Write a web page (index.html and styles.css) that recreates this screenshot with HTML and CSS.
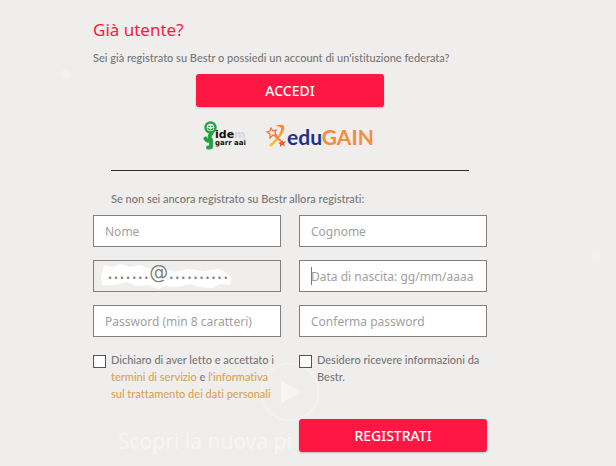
FILE: index.html
```html
<!DOCTYPE html>
<html lang="it">
<head>
<meta charset="utf-8">
<meta name="viewport" content="width=device-width, initial-scale=1">
<title>Bestr - Registrazione</title>
<link rel="stylesheet" href="styles.css">
</head>
<body>
<div class="backdrop" aria-hidden="true">
  <span class="spot spot-left"></span>
  <span class="spot spot-right"></span>
  <svg class="play" viewBox="0 0 60 60"><circle cx="30" cy="30" r="28.5" fill="none" stroke="#f4f3f0" stroke-width="1.5"/><path d="M21 19 40 30 21 41Z" fill="#f6f5f2"/></svg>
  <p class="teaser">Scopri la nuova pi</p>
</div>
<main class="page">
  <section class="login">
    <h1>Già utente?</h1>
    <p>Sei già registrato su Bestr o possiedi un account di un'istituzione federata?</p>
    <button class="btn btn-login" type="button">ACCEDI</button>
    <div class="logos">
      <svg class="idem" viewBox="0 0 44 32" role="img" aria-label="idem garr aai">
        <g fill="none" stroke="#25a244" stroke-linecap="round" stroke-linejoin="round">
          <circle cx="7.500" cy="7.500" r="5" stroke-width="2.400"/>
          <path d="M8.500 13Q5 18 8 20V27" stroke-width="4"/>
          <path d="M2.500 18.500Q4 22 7 20M7 27.500H5" stroke-width="4"/>
          <path d="M5 8.500q2.500 3 5 0" stroke-width="1.200"/>
        </g>
        <circle cx="6" cy="6.300" r="0.900" fill="#25a244"/><circle cx="9" cy="6.300" r="0.900" fill="#25a244"/>
        <text class="idem-name" x="12" y="18">ide<tspan fill="#d2d8d9">m</tspan></text>
        <text class="idem-sub" x="12" y="25">garr aai</text>
      </svg>
      <svg class="edugain" viewBox="0 0 112 32" role="img" aria-label="eduGAIN">
        <defs><linearGradient id="ribbon" x1="0" y1="0" x2="0" y2="1"><stop offset="0" stop-color="#f58635"/><stop offset="1" stop-color="#ffc52f"/></linearGradient></defs>
        <g transform="translate(1 2)">
          <path d="M9 4Q20 0 18 8Q15 16 5 25L3 23Q13 15 15 8Q16 4 9 4Z" fill="url(#ribbon)"/>
          <path d="m5 6 2 3 3-1-1 3 2 3-4-1-3 3v-4l-3-2 3-1Z" fill="#fff0dd" stroke="#ee7145" stroke-width="1.300"/>
          <path d="m8 13 9 8" stroke="#f58a38" stroke-width="2"/>
          <path d="m16 18 1 2 3-1-2 3 1 2-3-1-2 2v-3l-2-1 3-1Z" fill="#e85b3e"/>
        </g>
        <text class="edugain-name" x="22" y="25"><tspan fill="#1c3290">edu</tspan><tspan fill="#f88b37">GAIN</tspan></text>
      </svg>
    </div>
  </section>
  <hr>
  <form class="signup">
    <p class="intro">Se non sei ancora registrato su Bestr allora registrati:</p>
    <div class="fields">
      <input type="text" aria-label="Nome" placeholder="Nome">
      <input type="text" aria-label="Cognome" placeholder="Cognome">
      <div class="email">
        <svg class="mask" viewBox="0 0 188 32" aria-hidden="true"><path d="M11 5 20 7 28 4 37 7 47 5 57 9 70 8 82 12 95 9 110 11 126 9 134 13 139 18 137 25 127 24 119 28 106 27 97 24 84 27 72 26 65 29 56 25 43 26 34 22 21 25 9 25 8 17Z" fill="#fff"/></svg>
        <input type="text" aria-label="Email" value=".......@.........." readonly>
      </div>
      <input class="active" type="text" aria-label="Data di nascita" placeholder="Data di nascita: gg/mm/aaaa">
      <input type="password" aria-label="Password" placeholder="Password (min 8 caratteri)">
      <input type="password" aria-label="Conferma password" placeholder="Conferma password">
    </div>
    <div class="consents">
      <div class="consent">
        <input id="terms" type="checkbox">
        <label for="terms">Dichiaro di aver letto e accettato i <a href="#termini">termini di servizio</a> e <a href="#privacy">l'informativa sul trattamento dei dati personali</a></label>
      </div>
      <div class="consent">
        <input id="news" type="checkbox">
        <label for="news">Desidero ricevere informazioni da Bestr.</label>
      </div>
    </div>
    <div class="actions"><button class="btn" type="submit">REGISTRATI</button></div>
  </form>
</main>
</body>
</html>
```
FILE: styles.css
```css
* {
  box-sizing: border-box;
}

body {
  margin: 0;
  background: #efeeec;
  color: #777;
  font: 500 11px/17px Lato, "Noto Sans", sans-serif;
  font-variant-ligatures: none;
}

h1,
p {
  margin: 0;
}

.page {
  position: relative;
  padding: 18px 129px 14px 93px;
}

.login {
  display: flex;
  flex-direction: column;
}

h1 {
  margin-bottom: 7px;
  color: #ff1744;
  font: 17px/24px "Noto Sans", sans-serif;
}

.login p {
  white-space: nowrap;
}

.btn {
  height: 33px;
  padding: 0;
  border: 0;
  border-radius: 3px;
  background: #ff1744;
  box-shadow: 0 1px 2px rgba(0, 0, 0, 0.2);
  color: #fff;
  font: 500 14px/33px "Noto Sans", sans-serif;
}

.btn-login {
  width: calc(50% - 9px);
  margin-top: 8px;
  align-self: center;
}

.logos {
  display: flex;
  justify-content: center;
  gap: 18px;
  height: 32px;
  margin-top: 13px;
}

.idem {
  width: 44px;
  height: 32px;
}

.idem-name {
  fill: #111;
  font: bold 11px "DejaVu Sans", sans-serif;
}

.idem-sub {
  fill: #111;
  font: bold 7px "DejaVu Sans", sans-serif;
}

.edugain {
  width: 112px;
  height: 32px;
}

.edugain-name {
  font: bold 21px Lato, sans-serif;
}

hr {
  margin: 18px 18px 19px;
  border: 0;
  border-top: 1px solid #332f30;
}

.intro {
  margin: 0 18px 8px;
  white-space: nowrap;
}

.fields,
.consents,
.actions {
  display: grid;
  grid-template-columns: 1fr 1fr;
  gap: 13px 18px;
}

.fields input {
  width: 100%;
  height: 32px;
  padding: 0 11px;
  border: 1px solid #808080;
  border-radius: 0;
  background: #fff;
  color: #808080;
  font: 12px "Noto Sans", sans-serif;
}

.fields input::placeholder {
  color: #a0a0a0;
  opacity: 1;
}

.fields .active {
  background: linear-gradient(#777, #777) 11px 6px / 1px 18px no-repeat #fff;
}

.email {
  position: relative;
  height: 32px;
}

.mask {
  position: absolute;
  inset: 0;
}

.fields .email input {
  position: relative;
  padding: 0 13px 8px;
  background: transparent;
  font: 19px "DejaVu Sans", sans-serif;
}

.consents {
  margin-top: 14px;
}

.consent {
  display: flex;
  gap: 5px;
}

.consent input {
  appearance: none;
  flex: none;
  width: 13px;
  height: 13px;
  margin: 4px 0 0;
  border: 1px solid #555;
  background: #fff;
}

a {
  color: #d6a456;
  text-decoration: none;
}

.actions {
  margin-top: 17px;
}

.actions .btn {
  grid-column: 2;
}

.backdrop {
  position: absolute;
  inset: 0;
  overflow: hidden;
}

.play {
  position: absolute;
  top: 362px;
  left: 260px;
  width: 60px;
  height: 60px;
}

.teaser {
  position: absolute;
  top: 427px;
  left: 118px;
  color: #f6f5f3;
  font: 21px/28px "Noto Sans", sans-serif;
}

.spot {
  position: absolute;
  width: 10px;
  height: 10px;
  border-radius: 50%;
  background: #f2f1f0;
}

.spot-left {
  top: 69px;
  left: 61px;
}

.spot-right {
  top: 251px;
  left: 591px;
}
```
